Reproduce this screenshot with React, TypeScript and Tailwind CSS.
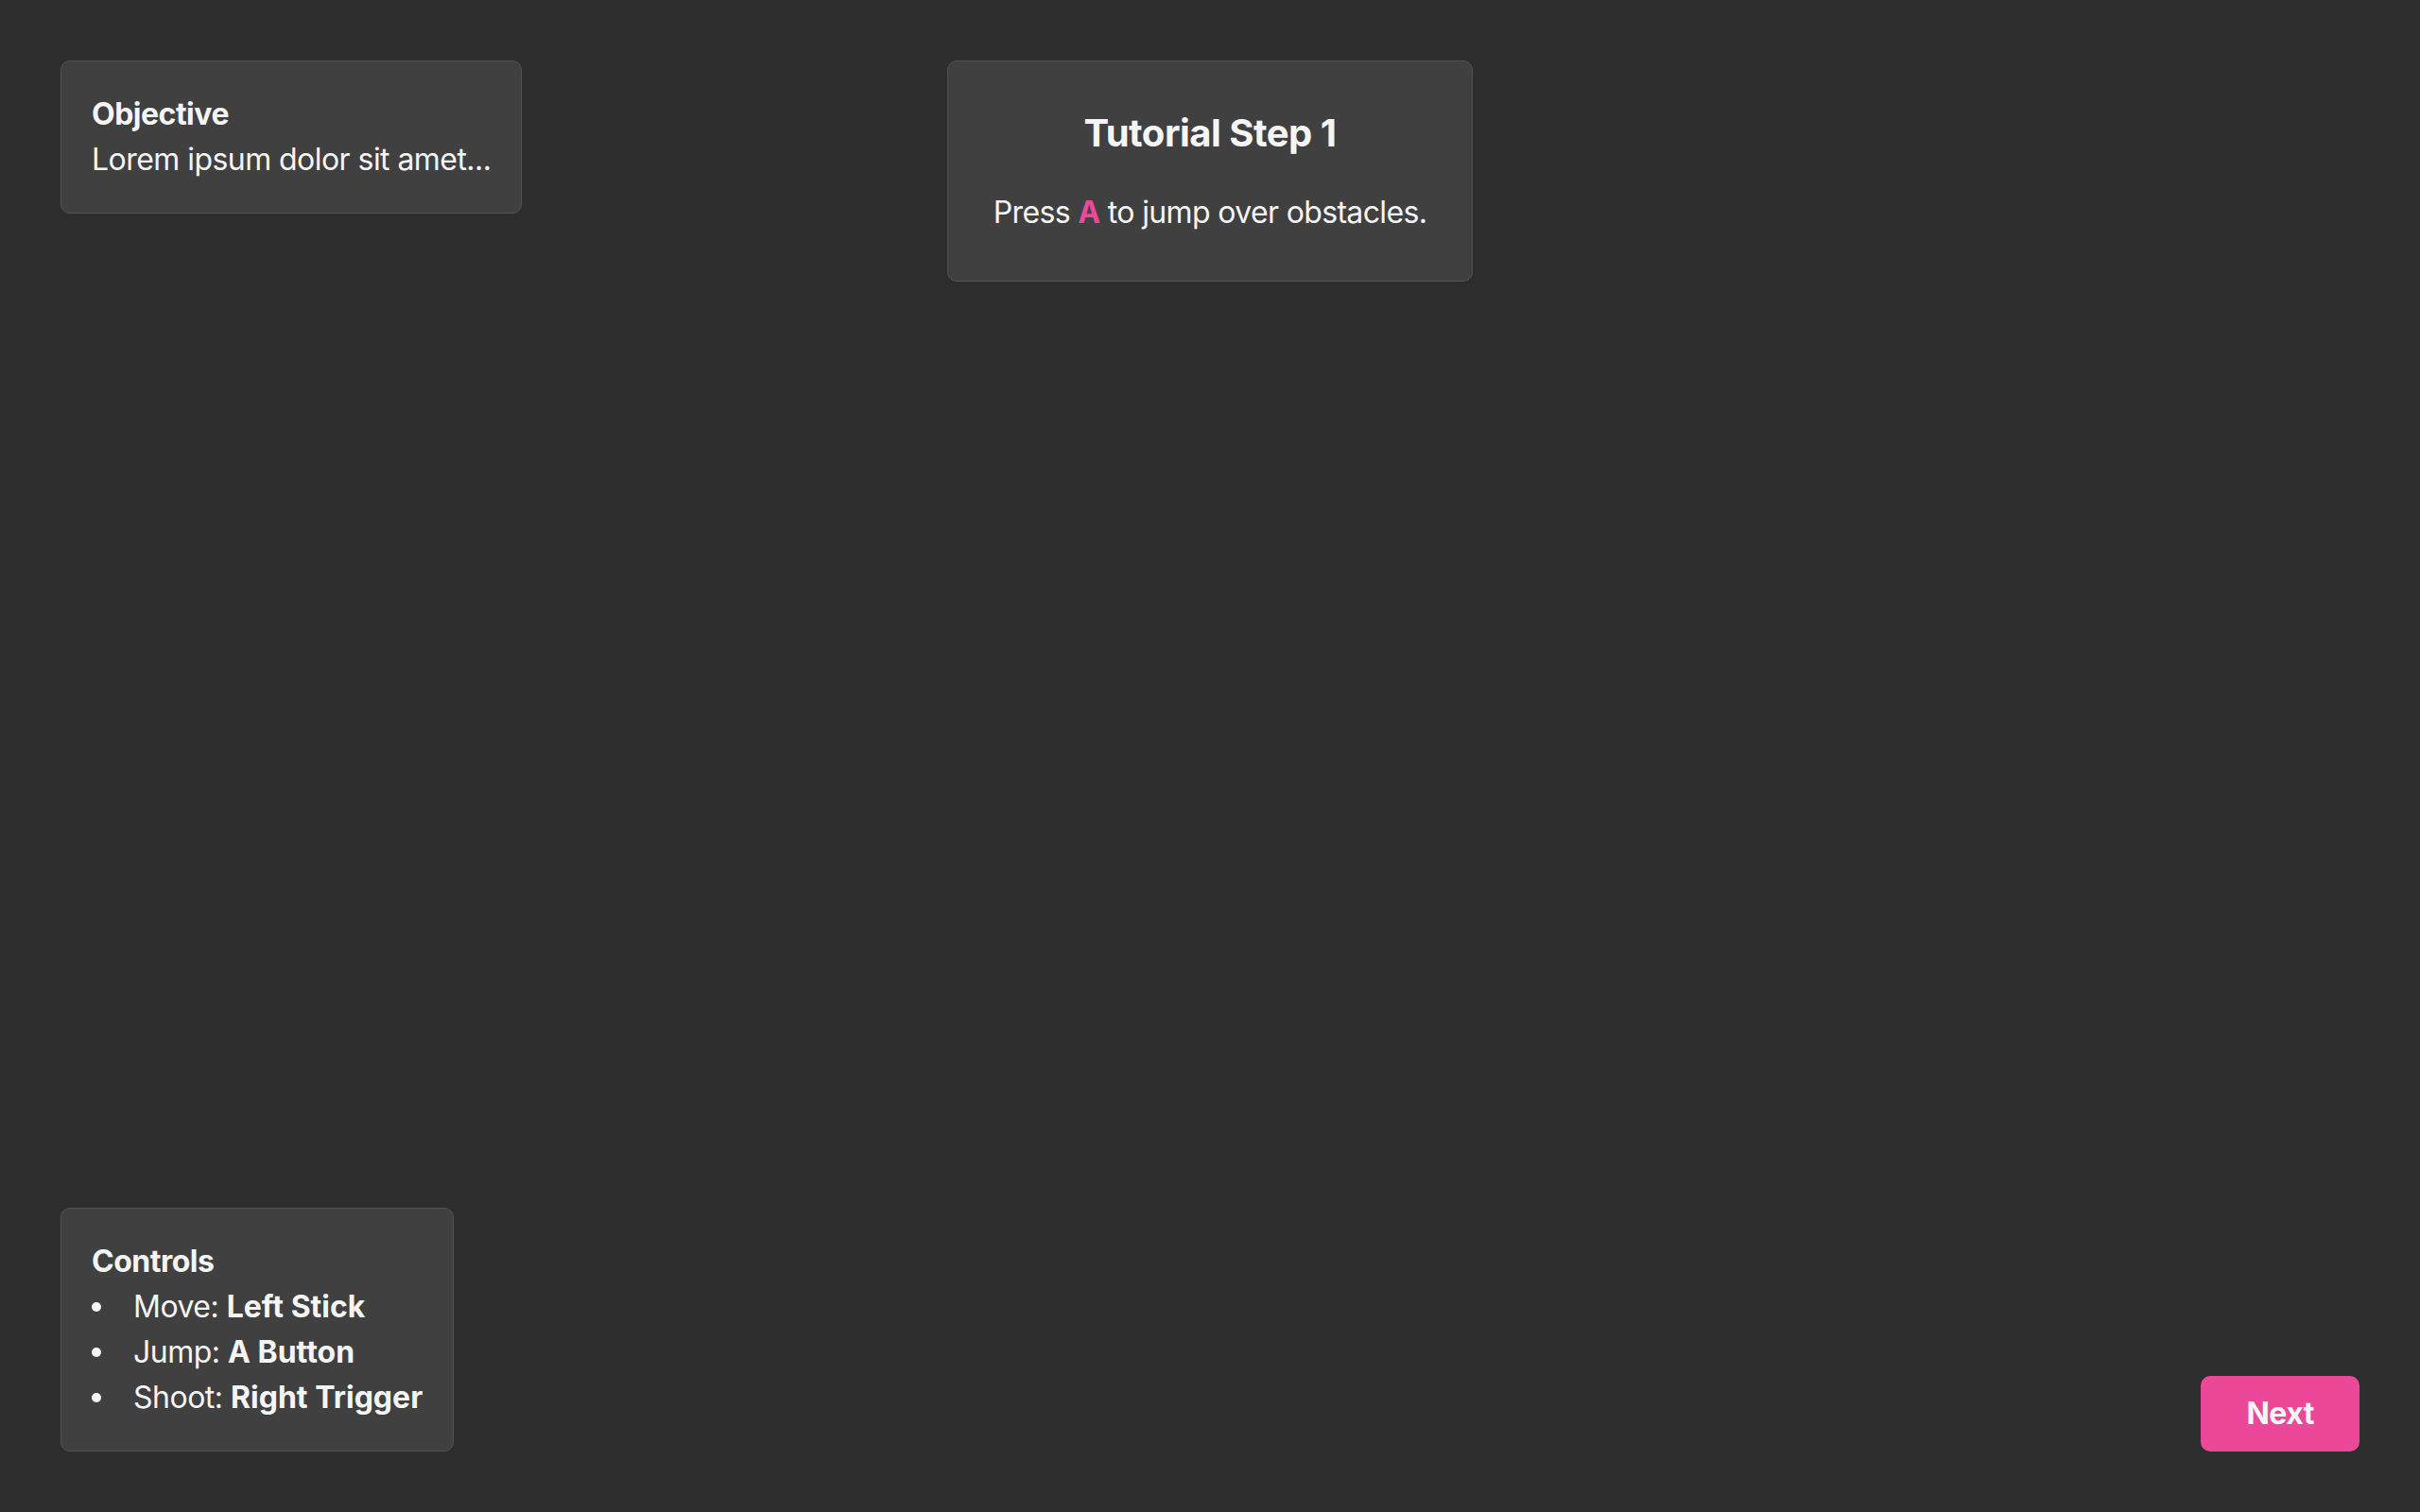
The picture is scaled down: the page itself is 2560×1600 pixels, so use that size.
import React from "react";

const box = "rounded-[10px] border border-[#535353] bg-[#404040] text-[#f5f5f5]";

function Bullet({ label, value }: { label: string; value: string }) {
  return (
    <li className="flex items-center">
      <span className="flex w-[44px] shrink-0 items-center">
        <span className="h-[10px] w-[10px] rounded-full bg-[#f5f5f5]" />
      </span>
      <span>
        {label} <span className="font-bold tracking-[0px]">{value}</span>
      </span>
    </li>
  );
}

export default function App() {
  return (
    <div
      className="flex h-[1600px] w-full flex-col justify-between bg-[#2d2d2d] p-16 text-[32px] leading-[48px] tracking-[-0.5px] text-[#f5f5f5]"
      style={{ fontFamily: "Inter, 'Noto Sans', sans-serif" }}
    >
      <div className="grid grid-cols-[1fr_auto_1fr] items-start">
        <div className="justify-self-start">
          <div className={`${box} p-8`}>
            <div className="font-bold">Objective</div>
            <div className="tracking-[-0.55px]">Lorem ipsum dolor sit amet...</div>
          </div>
        </div>
        <div className={`${box} p-12 text-center`}>
          <div className="mb-8 text-[40px] font-bold leading-[56px]">Tutorial Step 1</div>
          <div className="tracking-[-0.65px]">
            Press <span className="font-bold text-[#ec4899]">A</span> to jump over obstacles.
          </div>
        </div>
        <div />
      </div>
      <div className="flex items-end justify-between">
        <div className={`${box} p-8`}>
          <div className="font-bold">Controls</div>
          <ul>
            <Bullet label="Move:" value="Left Stick" />
            <Bullet label="Jump:" value="A Button" />
            <Bullet label="Shoot:" value="Right Trigger" />
          </ul>
        </div>
        <button className="rounded-[10px] bg-[#ec4899] px-12 py-4 text-[32px] font-bold leading-[48px] text-[#f5f5f5]">
          Next
        </button>
      </div>
    </div>
  );
}
